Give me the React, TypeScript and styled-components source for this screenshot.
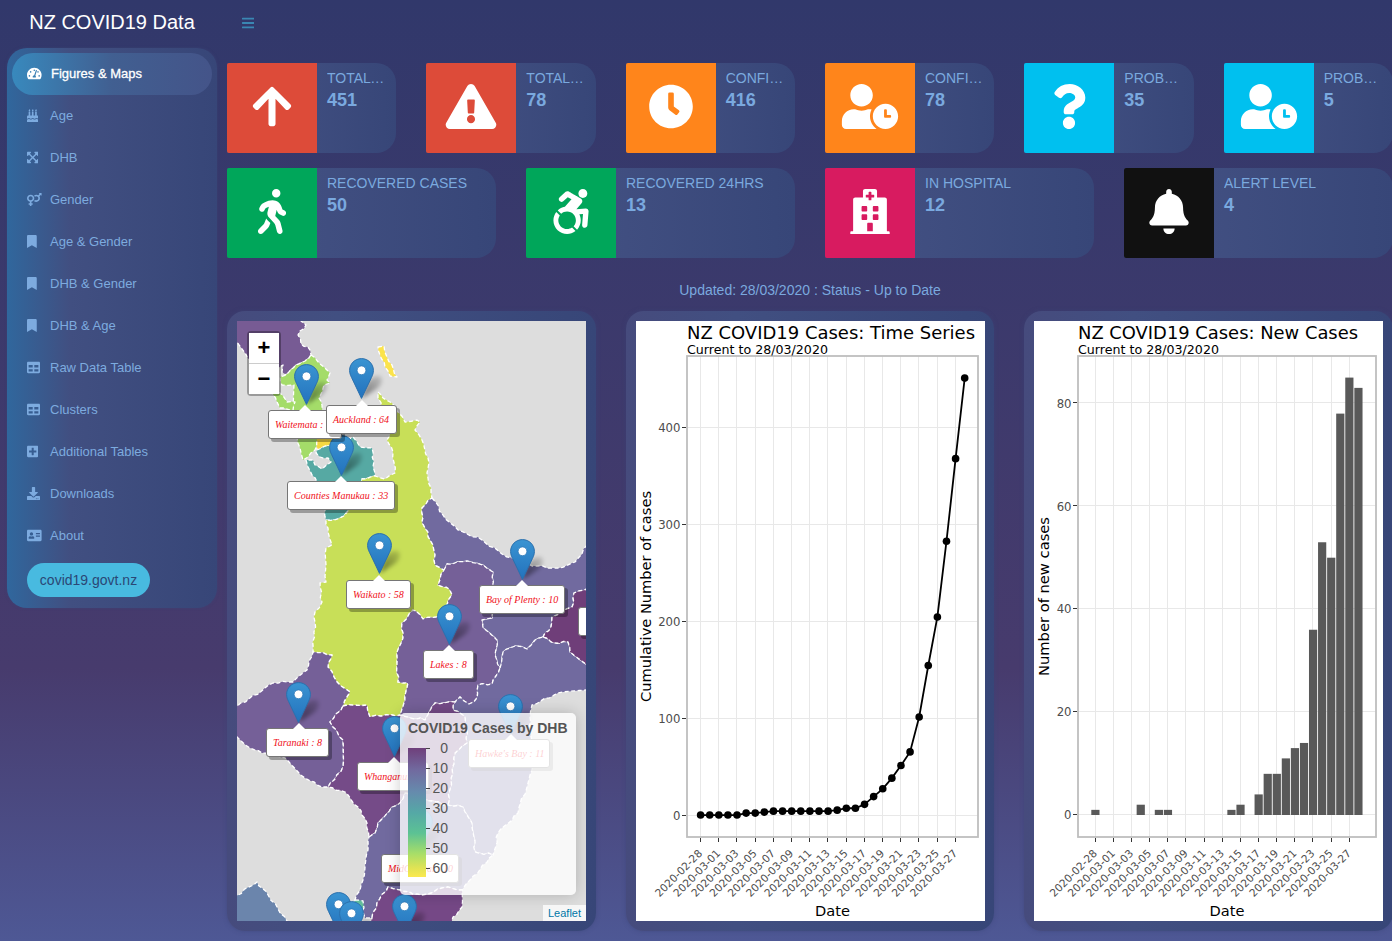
import React from "react";
import styled, { createGlobalStyle, css } from "styled-components";
import type { IconType } from "react-icons";
import {
  FaTachometerAlt, FaBirthdayCake, FaExpandArrowsAlt, FaVenusMars, FaBookmark, FaTable,
  FaPlusSquare, FaDownload, FaAddressCard, FaBars, FaArrowUp, FaExclamationTriangle,
  FaClock, FaUserClock, FaQuestion, FaWalking, FaAccessibleIcon, FaHospital, FaBell,
} from "react-icons/fa";

const GlobalStyle = createGlobalStyle`
  *, *::before, *::after { box-sizing: border-box; }
  html, body { margin: 0; padding: 0; overflow: hidden; }
  body { font-family: "Liberation Sans", Arial, sans-serif; font-size: 14px; color: #7aa9df; }
`;

const panelFill = "linear-gradient(to right, rgb(70,75,125) 0%, rgb(65,79,129) 30%, rgb(55,70,120) 100%)";

const Page = styled.div`
  width: 1392px;
  height: 941px;
  overflow: hidden;
  display: flex;
  flex-direction: column;
  background: linear-gradient(to bottom, rgb(49,56,107) 0%, rgb(71,59,109) 71%, rgb(78,88,149) 100%);
`;

const Header = styled.header`
  height: 48px;
  flex: none;
  display: flex;
  padding-bottom: 3px;
  align-items: center;
`;

const Logo = styled.div`
  width: 224px;
  text-align: center;
  font-size: 20px;
  color: #fff;
`;

const MenuToggle = styled.button`
  border: 0;
  background: none;
  margin-left: 18px;
  padding: 0;
  display: flex;
  color: #3a87b3;
  svg { height: 14px; width: 12.25px; }
`;

const Body = styled.div`
  display: flex;
  flex: 1;
  min-height: 0;
  align-items: flex-start;
  padding-left: 7px;
`;

const Sidebar = styled.nav`
  width: 210px;
  height: 560px;
  flex: none;
  padding: 5px;
  border-radius: 20px;
  background: linear-gradient(to right, rgb(48,103,157) 0%, rgb(65,79,129) 30%, rgb(55,70,120) 100%);
  box-shadow: 0 0 3px rgba(59,68,120,0.7);
`;

const NavItem = styled.a<{ $active?: boolean }>`
  display: flex;
  align-items: center;
  height: 42px;
  padding: 0 0 2px 15px;
  border-radius: 21px;
  font-size: 13px;
  color: ${(p) => (p.$active ? "#fff" : "#7dabdf")};
  ${(p) => p.$active && css`
    -webkit-text-stroke: 0.3px #fff;
    background: linear-gradient(to right, rgb(56,137,189) 0%, rgb(65,95,145) 50%, rgb(68,84,137) 100%);
  `}
`;

const NavIcon = styled.span<{ $active?: boolean; $w: number }>`
  width: ${(p) => (p.$active ? 24 : 23)}px;
  display: flex;
  svg { height: 13px; width: ${(p) => p.$w}px; }
`;

const SiteButton = styled.a`
  display: inline-flex;
  align-items: center;
  justify-content: center;
  width: 123px;
  height: 34px;
  margin: 6px 0 0 15px;
  border-radius: 17px;
  font-size: 14px;
  background: #48bae0;
  color: #2b4775;
`;

const Main = styled.main`
  flex: none;
  width: 1166px;
  margin-left: 10px;
  padding-top: 15px;
  display: flex;
  flex-direction: column;
`;

const Row = styled.section<{ $cols: number }>`
  display: grid;
  grid-template-columns: repeat(${(p) => p.$cols}, minmax(0, 1fr));
  column-gap: 30px;
  margin-bottom: 15px;
`;

const InfoCard = styled.article`
  display: flex;
  height: 90px;
  border-radius: 2px 20px 20px 2px;
  background: ${panelFill};
`;

const InfoIcon = styled.div<{ $color: string }>`
  width: 90px;
  flex: none;
  display: flex;
  align-items: center;
  justify-content: center;
  padding-bottom: 4px;
  border-radius: 2px 0 0 2px;
  background: ${(p) => p.$color};
  color: #fff;
  svg { height: 45px; width: 60px; }
`;

const InfoContent = styled.div`
  flex: 1;
  min-width: 0;
  padding: 5px 10px;
`;

const InfoLabel = styled.div`
  line-height: 20px;
  overflow: hidden;
  white-space: nowrap;
  text-overflow: ellipsis;
`;

const InfoValue = styled.div`
  font-size: 18px;
  line-height: 25px;
  font-weight: bold;
`;

const Status = styled.p`
  margin: 7px 0 11px;
  line-height: 20px;
  text-align: center;
`;

const Panel = styled.article`
  height: 620px;
  padding: 10px;
  border-radius: 18px;
  background: ${panelFill};
  box-shadow: 0 0 4px rgba(59,68,120,0.6);
`;

const ChartSurface = styled.svg`
  display: block;
  width: 349px;
  height: 600px;
  background: #fff;
  font-family: "DejaVu Sans", Verdana, sans-serif;
`;

/* ---------- Map ---------- */

const MapFrame = styled.div`
  position: relative;
  width: 349px;
  height: 600px;
  overflow: hidden;
  background: #ddd;
`;

const MapSurface = styled.svg`
  display: block;
  width: 349px;
  height: 600px;
`;

const Marker = styled.svg<{ $x: number; $y: number }>`
  position: absolute;
  left: ${(p) => p.$x - 12.5}px;
  top: ${(p) => p.$y}px;
  width: 44px;
  height: 42px;
  overflow: visible;
`;

const Tip = styled.div<{ $x: number; $y: number; $w: number }>`
  position: absolute;
  left: ${(p) => p.$x}px;
  top: ${(p) => p.$y}px;
  width: ${(p) => p.$w}px;
  height: 29px;
  padding-left: 6px;
  line-height: 27px;
  border: 1px solid #767676;
  border-radius: 3px;
  background: #fff;
  box-shadow: 3px 3px rgba(0, 0, 0, 0.3);
  font-family: "Liberation Serif", "Times New Roman", serif;
  font-style: italic;
  font-size: 10px;
  color: #f01020;
  white-space: nowrap;
`;

const TipArrow = styled.i<{ $at: number }>`
  position: absolute;
  left: ${(p) => p.$at - 6}px;
  top: -6px;
  border: 6px solid transparent;
  border-top: 0;
  border-bottom-color: #fff;
`;

const ZoomControl = styled.div`
  position: absolute;
  left: 10px;
  top: 10px;
  width: 34px;
  border: 2px solid rgba(0, 0, 0, 0.3);
  border-radius: 4px;
  background-clip: padding-box;
`;

const ZoomButton = styled.button`
  display: block;
  width: 30px;
  height: 30px;
  padding: 0;
  border: 0;
  background: #fff;
  font: bold 22px/30px "Liberation Sans", Arial, sans-serif;
  color: #000;
  & + & { border-top: 1px solid #ccc; height: 31px; }
`;

const Legend = styled.div`
  position: absolute;
  left: 163px;
  top: 392px;
  width: 176px;
  height: 182px;
  padding: 6px 8px;
  border-radius: 5px;
  background: rgba(255, 255, 255, 0.8);
  box-shadow: 0 0 15px rgba(0, 0, 0, 0.2);
  color: #555;
`;

const LegendTitle = styled.strong`
  display: block;
  line-height: 18px;
  margin-bottom: 3px;
  white-space: nowrap;
`;

const LegendScale = styled.svg`
  display: block;
  width: 60px;
  height: 145px;
  font-size: 14px;
`;

const Attribution = styled.div`
  position: absolute;
  right: 0;
  bottom: 0;
  width: 43px;
  height: 16px;
  line-height: 16px;
  text-align: center;
  font-size: 11px;
  background: rgba(255, 255, 255, 0.75);
  color: #0078a8;
`;

/* ---------- Data ---------- */

const navItems: { icon: IconType; label: string; w: number }[] = [
  { icon: FaTachometerAlt, label: "Figures & Maps", w: 14.6 },
  { icon: FaBirthdayCake, label: "Age", w: 11.4 },
  { icon: FaExpandArrowsAlt, label: "DHB", w: 11.4 },
  { icon: FaVenusMars, label: "Gender", w: 14.6 },
  { icon: FaBookmark, label: "Age & Gender", w: 9.75 },
  { icon: FaBookmark, label: "DHB & Gender", w: 9.75 },
  { icon: FaBookmark, label: "DHB & Age", w: 9.75 },
  { icon: FaTable, label: "Raw Data Table", w: 13 },
  { icon: FaTable, label: "Clusters", w: 13 },
  { icon: FaPlusSquare, label: "Additional Tables", w: 11.4 },
  { icon: FaDownload, label: "Downloads", w: 13 },
  { icon: FaAddressCard, label: "About", w: 14.6 },
];

type Info = { icon: IconType; color: string; label: string; value: number };

const caseInfo: Info[] = [
  { icon: FaArrowUp, color: "#dd4b39", label: "TOTAL CASES", value: 451 },
  { icon: FaExclamationTriangle, color: "#dd4b39", label: "TOTAL 24HRS", value: 78 },
  { icon: FaClock, color: "#ff851b", label: "CONFIRMED", value: 416 },
  { icon: FaUserClock, color: "#ff851b", label: "CONFIRMED 24HRS", value: 78 },
  { icon: FaQuestion, color: "#00c0ef", label: "PROBABLE", value: 35 },
  { icon: FaUserClock, color: "#00c0ef", label: "PROBABLE 24HRS", value: 5 },
];

const statusInfo: Info[] = [
  { icon: FaWalking, color: "#00a65a", label: "RECOVERED CASES", value: 50 },
  { icon: FaAccessibleIcon, color: "#00a65a", label: "RECOVERED 24HRS", value: 13 },
  { icon: FaHospital, color: "#d81b60", label: "IN HOSPITAL", value: 12 },
  { icon: FaBell, color: "#111111", label: "ALERT LEVEL", value: 4 },
];

const cumulative = [1,1,1,1,1,3,3,4,5,5,5,5,5,5,5,6,8,8,12,20,28,39,52,66,102,155,205,283,368,451];
const daily = [1,0,0,0,0,2,0,1,1,0,0,0,0,0,0,1,2,0,4,8,8,11,13,14,36,53,50,78,85,83];
const dates = ["02-28","03-01","03-03","03-05","03-07","03-09","03-11","03-13","03-15","03-17","03-19","03-21","03-23","03-25","03-27"];

const regions: { name: string; fill: string; pts: string }[] = [
  { name: "Northland", fill: "#775b94", pts: "233,317 301,317 301,321 306,325 298,335 301,344 308,347 311,355 305,361 293,368 286,375 282,372 283,365 276,370 262,372 248,358 233,336" },
  { name: "Waitemata", fill: "#a4dc69", pts: "311,355 320,364 325,368 330,373 327,380 330,383 324,385 322,392 319,398 322,405 323,425 317,445 315,450 303,460 300,448 297,438 293,405 294,385 282,385 280,377 286,375 293,368 305,361" },
  { name: "Waitemata West", fill: "#a4dc69", pts: "272,393 280,393 287,402 295,402 293,410 280,408" },
  { name: "Auckland", fill: "#f5d842", pts: "317,438 340,438 341,443 332,446 325,446 317,450" },
  { name: "Great Barrier", fill: "#fbe34b", pts: "378,347 384,346 387,357 392,365 397,377 390,376 385,367 380,355" },
  { name: "Counties Manukau", fill: "#56a9a3", pts: "317,450 325,446 332,446 353,437 360,447 372,448 375,476 362,479 357,495 347,512 340,518 326,520 325,510 317,482 312,475 308,467 306,460 313,460 315,465 322,469 331,462 328,458 320,457 316,453" },
  { name: "Waikato", fill: "#c8df58", pts: "378,392 383,398 392,403 398,412 405,422 417,420 420,422 415,430 422,440 428,458 428,478 432,498 422,508 422,522 425,528 433,545 435,565 444,570 438,585 450,590 452,595 447,605 437,617 423,619 413,610 402,623 403,638 397,652 398,682 408,683 405,695 400,715 392,715 370,717 367,705 343,706 350,692 337,682 328,667 332,655 313,652 315,622 315,612 322,602 320,583 326,582 326,565 326,548 332,545 328,528 326,520 340,518 347,512 357,495 362,479 375,476 385,479 395,473 393,452 387,440 390,435 388,420 382,408 378,398" },
  { name: "Bay of Plenty", fill: "#716a9f", pts: "432,498 443,515 458,530 482,540 502,554 532,566 558,568 575,562 590,541 590,587 574,593 572,607 552,617 551,627 543,637 535,640 527,649 515,646 503,652 500,668 495,655 497,640 483,628 482,620 492,618 493,572 483,565 468,561 447,564 444,570 435,565 433,545 425,528 422,522 422,508" },
  { name: "Lakes", fill: "#756098", pts: "444,570 447,564 468,561 483,565 493,572 492,618 482,620 483,628 497,640 495,655 500,668 492,684 478,685 477,698 469,704 460,697 455,702 435,703 425,720 400,715 405,695 408,683 398,682 397,652 403,638 402,623 413,610 423,619 437,617 447,605 452,595 450,590 438,585" },
  { name: "Hawke's Bay", fill: "#716a9f", pts: "500,668 503,652 515,646 527,649 535,640 543,637 555,643 568,642 570,652 590,669 590,689 558,693 532,705 530,717 532,770 518,813 498,833 493,855 475,852 472,823 463,807 448,805 455,753 467,743 465,717 453,710 455,702 460,697 469,704 477,698 478,685 492,684" },
  { name: "Tairawhiti", fill: "#6f3e79", pts: "543,637 551,627 552,617 572,607 574,593 590,587 590,669 570,652 568,642 555,643" },
  { name: "Taranaki", fill: "#756098", pts: "233,709 273,683 293,682 307,670 313,652 332,655 328,667 337,682 350,692 343,706 330,722 343,740 343,767 328,787 322,787 305,778 285,758 262,753 250,748 233,733" },
  { name: "Whanganui", fill: "#754b88", pts: "343,706 367,705 370,717 392,715 400,715 425,720 435,703 455,702 453,710 465,717 467,743 455,753 448,805 425,800 405,793 400,803 392,807 378,823 375,833 369,837 367,823 358,807 345,792 328,787 343,767 343,740 330,722" },
  { name: "MidCentral", fill: "#716a9f", pts: "369,837 375,833 378,823 392,807 400,803 405,793 425,800 448,805 463,807 472,823 475,852 493,855 470,880 462,890 448,887 422,895 400,890 388,887 377,903 372,918 365,918 363,907 355,900 363,880 368,850" },
  { name: "Wairarapa", fill: "#754886", pts: "372,918 377,903 388,887 400,890 422,895 448,887 462,890 462,907 453,917 450,925 370,925" },
  { name: "Hutt Valley", fill: "#62bd9c", pts: "355,900 363,901 364,908 360,915 350,918" },
  { name: "Nelson", fill: "#6b85ac", pts: "233,898 257,882 262,888 287,921 290,925 233,925" },
];

/* Roughens each border edge; both neighbours of a shared edge get the same line. */
function borderPath(pts: string): string {
  const v = pts.split(" ").map((p) => p.split(",").map(Number));
  const out: string[] = [];
  v.forEach((a, i) => {
    const b = v[(i + 1) % v.length];
    const flip = a[0] > b[0] || (a[0] === b[0] && a[1] > b[1]);
    const [s, e] = flip ? [b, a] : [a, b];
    const dx = e[0] - s[0];
    const dy = e[1] - s[1];
    const len = Math.hypot(dx, dy);
    const n = Math.max(1, Math.round(len / 5));
    const seg: string[] = [];
    for (let k = 1; k < n; k++) {
      const h = Math.sin(s[0] * 12.9 + s[1] * 78.2 + k * 37.7) * 43758.5;
      const o = (h - Math.floor(h) - 0.5) * 2.4;
      seg.push(`${(s[0] + (dx * k) / n - (dy / len) * o).toFixed(1)},${(s[1] + (dy * k) / n + (dx / len) * o).toFixed(1)}`);
    }
    if (flip) seg.reverse();
    out.push(`${a[0]},${a[1]}`, ...seg);
  });
  return `M${out.join("L")}Z`;
}

const markers: [number, number][] = [
  [124.5, 37], [69.5, 42.5], [104, 113.5], [142.5, 212], [285.5, 217.5], [212.5, 282.5],
  [61.5, 361], [157, 395], [273.5, 373], [183.5, 488], [101, 571], [114.5, 580], [167.5, 573],
];

const tips: { text: string; x: number; y: number; w: number; at: number }[] = [
  { text: "Waitemata :", x: 31, y: 89, w: 74, at: 36 },
  { text: "Auckland : 64", x: 89, y: 84, w: 71, at: 34.5 },
  { text: "Counties Manukau : 33", x: 50, y: 160, w: 108, at: 53 },
  { text: "Waikato : 58", x: 109, y: 259, w: 65, at: 31.5 },
  { text: "Bay of Plenty : 10", x: 242, y: 264, w: 86, at: 42 },
  { text: "Lakes : 8", x: 186, y: 329, w: 51, at: 25 },
  { text: "", x: 341, y: 286, w: 80, at: 40 },
  { text: "Taranaki : 8", x: 29, y: 407, w: 63, at: 31.5 },
  { text: "Whanganui : 1", x: 120, y: 441, w: 72, at: 36 },
  { text: "Hawke's Bay : 11", x: 231, y: 418, w: 82, at: 42 },
  { text: "MidCentral : 10", x: 144, y: 533, w: 78, at: 38 },
];

/* ---------- Components ---------- */

function InfoBox({ icon: Icon, color, label, value }: Info) {
  return (
    <InfoCard>
      <InfoIcon $color={color}><Icon /></InfoIcon>
      <InfoContent>
        <InfoLabel>{label}</InfoLabel>
        <InfoValue>{value}</InfoValue>
      </InfoContent>
    </InfoCard>
  );
}

function CaseMap() {
  return (
    <MapFrame>
      <MapSurface viewBox="237 321 349 600">
        <defs>
          <linearGradient id="pin" x1="0" y1="0" x2="0" y2="1">
            <stop offset="0" stopColor="#3a94d2" />
            <stop offset="1" stopColor="#2372bd" />
          </linearGradient>
          <linearGradient id="pinShadow" x1="0" y1="1" x2="1" y2="0">
            <stop offset="0" stopColor="#000" stopOpacity="0.5" />
            <stop offset="1" stopColor="#000" stopOpacity="0.12" />
          </linearGradient>
          <filter id="soft" x="-50%" y="-50%" width="200%" height="200%"><feGaussianBlur stdDeviation="2" /></filter>
        </defs>
        {regions.map((r) => (
          <path key={r.name} d={borderPath(r.pts)} fill={r.fill} stroke="#fff" strokeWidth="1.3" strokeDasharray="4 2.5" strokeLinejoin="round" />
        ))}
      </MapSurface>
      {markers.map(([x, y]) => (
        <Marker key={`${x}-${y}`} $x={x} $y={y} viewBox="0 0 44 42">
          <path d="M12.5 40.5 L18 25 Q25 16 31 18 Q36 22 29 30 Z" fill="url(#pinShadow)" filter="url(#soft)" />
          <path d="M12.5 .6C5.8 .6 .6 5.9 .6 12.4c0 2.6.8 4.8 1.9 7L12.5 40.4 22.5 19.4c1.1-2.2 1.9-4.4 1.9-7C24.4 5.9 19.2.6 12.5.6z" fill="url(#pin)" stroke="#2b70ad" strokeWidth="1" />
          <circle cx="12.5" cy="12.3" r="4.4" fill="#fff" stroke="#2d79b8" strokeWidth="0.8" />
        </Marker>
      ))}
      {tips.map((t) => (
        <Tip key={t.x} $x={t.x} $y={t.y} $w={t.w}><TipArrow $at={t.at} />{t.text}</Tip>
      ))}
      <ZoomControl>
        <ZoomButton>+</ZoomButton>
        <ZoomButton>−</ZoomButton>
      </ZoomControl>
      <Legend>
        <LegendTitle>COVID19 Cases by DHB</LegendTitle>
        <LegendScale viewBox="0 0 60 145">
          <defs>
            <linearGradient id="scale" x1="0" y1="0" x2="0" y2="1">
              <stop offset="0" stopColor="#6f3f7b" />
              <stop offset="0.17" stopColor="#716a9f" />
              <stop offset="0.34" stopColor="#668bad" />
              <stop offset="0.5" stopColor="#55a8a6" />
              <stop offset="0.66" stopColor="#5cc294" />
              <stop offset="0.82" stopColor="#a8de68" />
              <stop offset="0.93" stopColor="#e0e354" />
              <stop offset="1" stopColor="#fbe94f" />
            </linearGradient>
          </defs>
          <rect x="0" y="8" width="18" height="129" fill="url(#scale)" />
          {[0, 10, 20, 30, 40, 50, 60].map((n, i) => (
            <g key={n}>
              <path d={`M18 ${8.5 + i * 20}h4`} stroke="#444" />
              <text x="40" y={13 + i * 20} textAnchor="end" fill="#555">{n}</text>
            </g>
          ))}
        </LegendScale>
      </Legend>
      <Attribution>Leaflet</Attribution>
    </MapFrame>
  );
}

type AxesProps = {
  left: number; right: number; x0: number; step: number;
  ticks: number[]; yOf: (n: number) => number;
  title: string; titleWidth: number; yTitle: string; yTitleX: number; yTitleY: number; yTitleWidth: number;
  children: React.ReactNode;
};

function Chart(p: AxesProps) {
  const mid = (p.left + p.right) / 2;
  return (
    <ChartSurface viewBox="0 0 349 600">
      <g stroke="#e8e8e8">
        {dates.map((d, i) => {
          const x = Math.floor(p.x0 + i * 2 * p.step) + 0.5;
          return <path key={d} d={`M${x} 35V516`} />;
        })}
        {p.ticks.map((t) => <path key={t} d={`M${p.left} ${Math.round(p.yOf(t)) - 0.5}H${p.right}`} />)}
      </g>
      {p.children}
      <rect x={p.left} y="35" width={p.right - p.left} height="481" fill="none" stroke="#bebebe" strokeWidth="1.8" />
      <g stroke="#333">
        {dates.map((d, i) => {
          const x = Math.floor(p.x0 + i * 2 * p.step) + 0.5;
          return <path key={d} d={`M${x} 517v4`} />;
        })}
        {p.ticks.map((t) => <path key={t} d={`M${p.left - 1} ${Math.round(p.yOf(t)) - 0.5}h-4`} />)}
      </g>
      <g fill="#4d4d4d">
        {p.ticks.map((t) => <text key={t} x={p.left - 6.5} y={p.yOf(t) + 4.3} fontSize="11.7" textAnchor="end">{t}</text>)}
        {dates.map((d, i) => (
          <text key={d} transform={`translate(${p.x0 + i * 2 * p.step + 2.5} 533) rotate(-45)`} fontSize="10.6" textAnchor="end" textLength="61.5" lengthAdjust="spacingAndGlyphs">
            {`2020-${d}`}
          </text>
        ))}
      </g>
      <text x={p.left} y="18" fontSize="17.4" textLength={p.titleWidth} lengthAdjust="spacingAndGlyphs">{p.title}</text>
      <text x={p.left} y="33" fontSize="12" textLength="141" lengthAdjust="spacingAndGlyphs">Current to 28/03/2020</text>
      <text x={mid} y="595" fontSize="14.6" textAnchor="middle">Date</text>
      <text transform={`translate(${p.yTitleX} ${p.yTitleY}) rotate(-90)`} fontSize="14.6" textAnchor="middle" textLength={p.yTitleWidth} lengthAdjust="spacingAndGlyphs">{p.yTitle}</text>
    </ChartSurface>
  );
}

function TimeSeriesChart() {
  const x = (i: number) => 64.6 + i * 9.107;
  const y = (n: number) => 495 - n * 0.971;
  return (
    <Chart left={51} right={342} x0={64.4} step={9.107} ticks={[0, 100, 200, 300, 400]} yOf={y}
      title="NZ COVID19 Cases: Time Series" titleWidth={288}
      yTitle="Cumulative Number of cases" yTitleX={15} yTitleY={275.5} yTitleWidth={211}>
      <polyline points={cumulative.map((n, i) => `${x(i)},${y(n)}`).join(" ")} fill="none" stroke="#000" strokeWidth="1.8" />
      {cumulative.map((n, i) => <circle key={i} cx={x(i)} cy={y(n)} r="3.8" />)}
    </Chart>
  );
}

function NewCasesChart() {
  const y = (n: number) => 494 - n * 5.146;
  return (
    <Chart left={44} right={342} x0={61.2} step={9.07} ticks={[0, 20, 40, 60, 80]} yOf={y}
      title="NZ COVID19 Cases: New Cases" titleWidth={280}
      yTitle="Number of new cases" yTitleX={14.5} yTitleY={275.5} yTitleWidth={159}>
      {daily.map((n, i) => n > 0 && <rect key={i} x={61.4 + i * 9.07 - 4.1} y={y(n)} width="8.2" height={494 - y(n)} fill="#595959" />)}
    </Chart>
  );
}

export default function App() {
  return (
    <Page>
      <GlobalStyle />
      <Header>
        <Logo>NZ COVID19 Data</Logo>
        <MenuToggle aria-label="Toggle menu"><FaBars /></MenuToggle>
      </Header>
      <Body>
        <Sidebar>
          {navItems.map(({ icon: Icon, label, w }, i) => (
            <NavItem key={label} $active={i === 0}>
              <NavIcon $active={i === 0} $w={w}><Icon /></NavIcon>
              {label}
            </NavItem>
          ))}
          <SiteButton>covid19.govt.nz</SiteButton>
        </Sidebar>
        <Main>
          <Row $cols={6}>{caseInfo.map((b) => <InfoBox key={b.label} {...b} />)}</Row>
          <Row $cols={4}>{statusInfo.map((b) => <InfoBox key={b.label} {...b} />)}</Row>
          <Status>Updated: 28/03/2020 : Status - Up to Date</Status>
          <Row $cols={3}>
            <Panel><CaseMap /></Panel>
            <Panel><TimeSeriesChart /></Panel>
            <Panel><NewCasesChart /></Panel>
          </Row>
        </Main>
      </Body>
    </Page>
  );
}
